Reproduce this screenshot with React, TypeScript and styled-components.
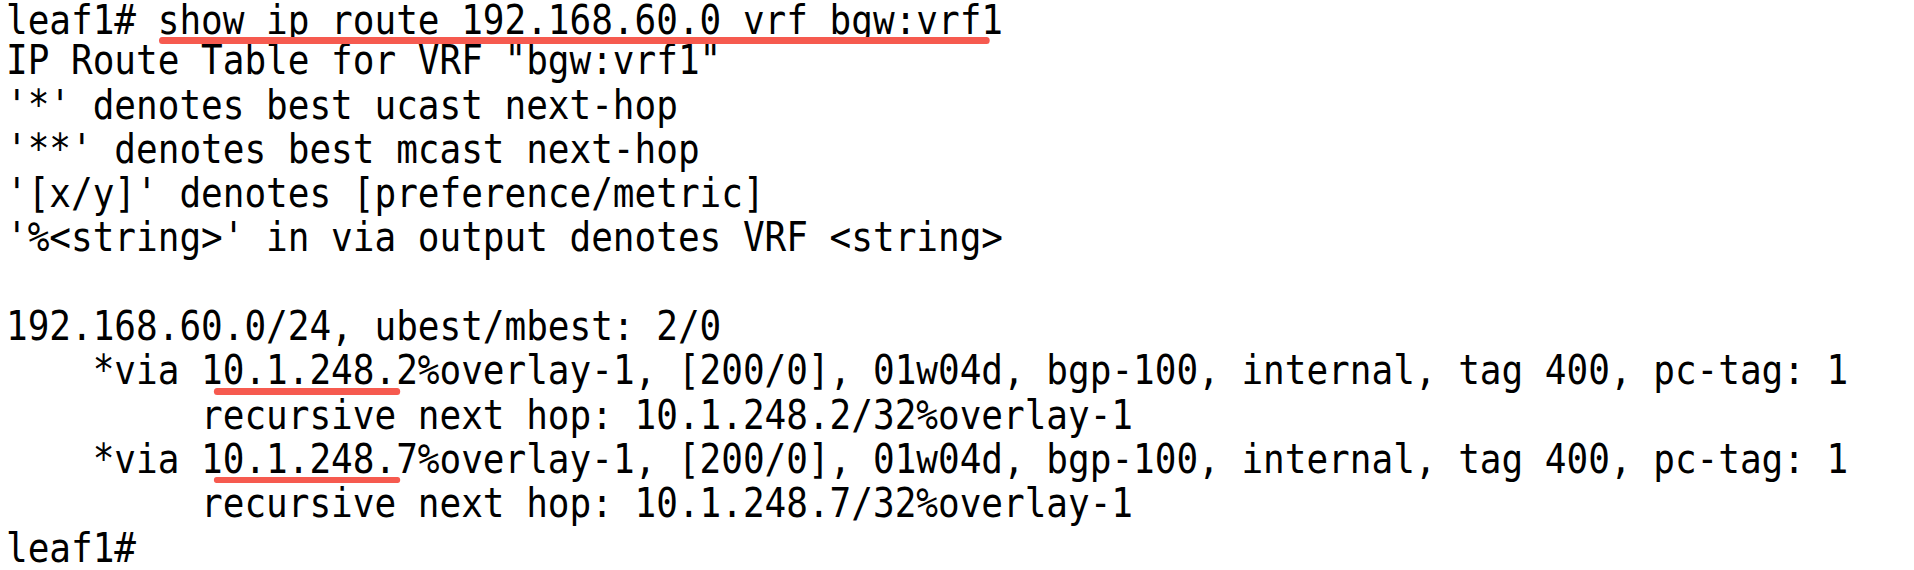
import React from "react";
import styled, { createGlobalStyle } from "styled-components";

const Global = createGlobalStyle`
  html, body {
    margin: 0;
    padding: 0;
    background: #ffffff;
    overflow: hidden;
  }
`;

const Screen = styled.main`
  width: 1914px;
  height: 570px;
  overflow: hidden;
  background: #ffffff;
  padding-left: 6px;
  box-sizing: border-box;
`;

const Terminal = styled.div`
  margin-top: -6px;
  font-family: "DejaVu Sans Mono", "Liberation Mono", monospace;
  font-size: 40px;
  line-height: 44.3px;
  color: #000000;
  transform: scaleX(0.9);
  transform-origin: 0 0;
  white-space: pre;
`;

const Line = styled.div<{ $drop?: number }>`
  box-sizing: border-box;
  height: 44.3px;
  padding-top: ${(p) => p.$drop ?? 0}px;
`;

const Marked = styled.span<{ $left: number; $right: number; $top: number }>`
  position: relative;
  &::after {
    content: "";
    position: absolute;
    left: ${(p) => p.$left}px;
    right: ${(p) => p.$right}px;
    top: calc(100% + ${(p) => p.$top}px);
    height: 6.5px;
    border-radius: 4px;
    background: #f65a4f;
  }
`;

const tail = "%overlay-1, [200/0], 01w04d, bgp-100, internal, tag 400, pc-tag: 1";

export default function App() {
  return (
    <>
      <Global />
      <Screen>
        <Terminal>
          <Line $drop={4}>
            {"leaf1# "}
            <Marked $left={1} $right={15} $top={-6}>
              show ip route 192.168.60.0 vrf bgw:vrf1
            </Marked>
          </Line>
          <Line>{'IP Route Table for VRF "bgw:vrf1"'}</Line>
          <Line>{"'*' denotes best ucast next-hop"}</Line>
          <Line>{"'**' denotes best mcast next-hop"}</Line>
          <Line>{"'[x/y]' denotes [preference/metric]"}</Line>
          <Line>{"'%<string>' in via output denotes VRF <string>"}</Line>
          <Line />
          <Line>{"192.168.60.0/24, ubest/mbest: 2/0"}</Line>
          <Line>
            {"    *via "}
            <Marked $left={14} $right={20} $top={-5}>
              10.1.248.2
            </Marked>
            {tail}
          </Line>
          <Line>{"         recursive next hop: 10.1.248.2/32%overlay-1"}</Line>
          <Line>
            {"    *via "}
            <Marked $left={14} $right={20} $top={-5}>
              10.1.248.7
            </Marked>
            {tail}
          </Line>
          <Line>{"         recursive next hop: 10.1.248.7/32%overlay-1"}</Line>
          <Line>{"leaf1#"}</Line>
        </Terminal>
      </Screen>
    </>
  );
}
